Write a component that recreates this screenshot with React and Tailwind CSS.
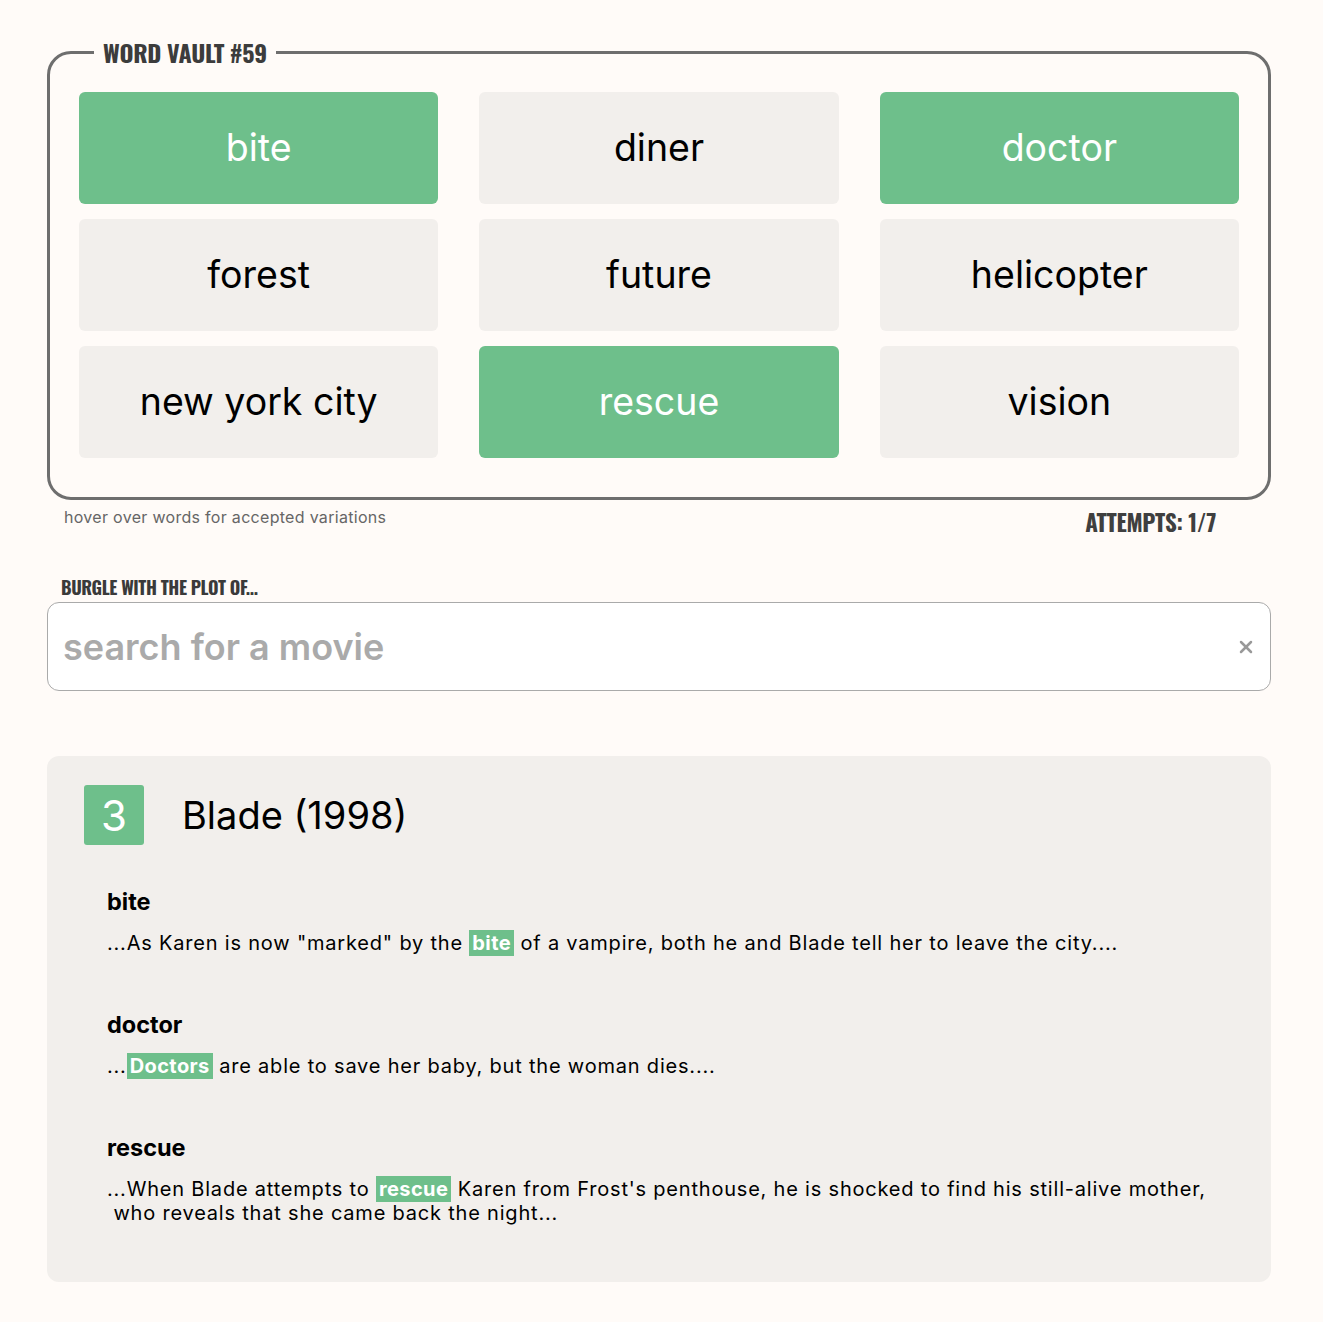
import { X } from 'lucide-react'

const words = [
  { w: 'bite', hit: true },
  { w: 'diner' },
  { w: 'doctor', hit: true },
  { w: 'forest' },
  { w: 'future' },
  { w: 'helicopter' },
  { w: 'new york city' },
  { w: 'rescue', hit: true },
  { w: 'vision' },
]

const cond = "font-['Oswald','Liberation_Sans_Narrow','DejaVu_Sans_Condensed',sans-serif] font-bold font-stretch-condensed"

function Hit({ children }) {
  return <span className="bg-[#6ebf8b] text-white font-bold px-[3px] py-[1px] tracking-[0.4px]">{children}</span>
}

const matches = [
  {
    word: 'bite',
    text: <>...As Karen is now "marked" by the <Hit>bite</Hit> of a vampire, both he and Blade tell her to leave the city....</>,
  },
  {
    word: 'doctor',
    text: <>...<Hit>Doctors</Hit> are able to save her baby, but the woman dies....</>,
  },
  {
    word: 'rescue',
    text: <>...When Blade attempts to <Hit>rescue</Hit> Karen from Frost's penthouse, he is shocked to find his still-alive mother,<br />&nbsp;who reveals that she came back the night...</>,
  },
]

export default function App() {
  return (
    <div className="min-h-[1322px] bg-[#fffbf8] font-['Inter','Noto_Sans',sans-serif] text-black">
      <div className="w-[1224px] ml-[47px] pt-[37px]">
        <fieldset className="border-[3px] border-[#6e6e6e] rounded-[24px] px-[29px] pt-[25px] pb-[39px]">
          <legend className={`${cond} ml-[15px] px-[9px] text-[24px] leading-[30px] text-[#3c3c3c] tracking-[-0.3px]`}>
            WORD VAULT #59
          </legend>
          <div className="grid grid-cols-3 gap-x-[41px] gap-y-[15px]">
            {words.map(({ w, hit }) => (
              <div
                key={w}
                className={`h-[112px] rounded-[6px] flex items-center justify-center text-[37.5px] ${hit ? 'bg-[#6ebf8b] text-white' : 'bg-[#f2efec] text-black'}`}
              >
                {w}
              </div>
            ))}
          </div>
        </fieldset>

        <div className="flex justify-between items-start">
          <p className="ml-[17px] mt-[5px] text-[16px] tracking-[0.3px] text-[#666]">hover over words for accepted variations</p>
          <p className={`${cond} mr-[55px] mt-[7px] text-[23px] leading-[30px] tracking-[-0.3px] text-[#3f3f3f]`}>ATTEMPTS: 1/7</p>
        </div>

        <p className={`${cond} ml-[14px] mt-[39px] text-[18px] leading-[22px] tracking-[-0.4px] text-[#3a3a3a]`}>BURGLE WITH THE PLOT OF...</p>

        <div className="mt-[4px] h-[89px] bg-white border border-[#aaa] rounded-[12px] flex items-center pl-[15px] pr-[14px]">
          <span className="flex-1 text-[36px] font-semibold text-[#aaa]">search for a movie</span>
          <X size={20} strokeWidth={3} className="text-[#999]" />
        </div>

        <div className="mt-[65px] bg-[#f2efec] rounded-[12px] pl-[37px] pr-[40px] pt-[29px] pb-[57px]">
          <div className="flex items-center gap-[38px]">
            <div className="w-[60px] h-[60px] bg-[#6ebf8b] rounded-[3px] flex items-center justify-center text-white text-[42px]">3</div>
            <h2 className="text-[38px]">Blade (1998)</h2>
          </div>
          <div className="ml-[23px] mt-[42px] flex flex-col gap-[55px]">
            {matches.map((m) => (
              <div key={m.word}>
                <h3 className="text-[23.5px] font-bold leading-[30px]">{m.word}</h3>
                <p className="mt-[14px] text-[20px] leading-[24px] tracking-[0.8px]">{m.text}</p>
              </div>
            ))}
          </div>
        </div>
      </div>
    </div>
  )
}
